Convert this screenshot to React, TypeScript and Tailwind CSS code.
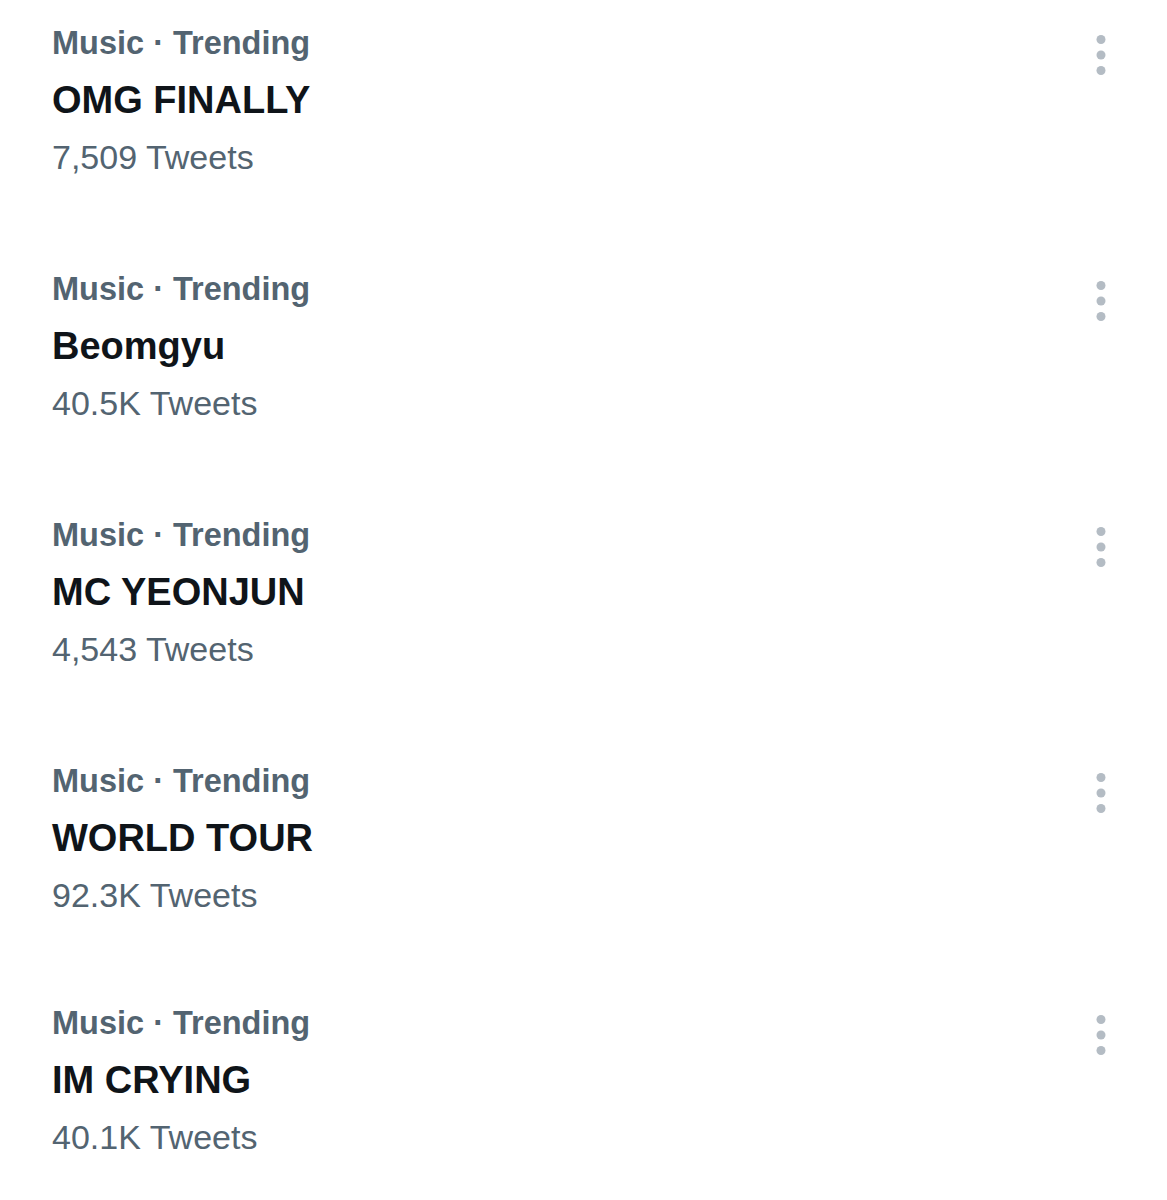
const trends = [
  { title: "OMG FINALLY", count: "7,509 Tweets" },
  { title: "Beomgyu", count: "40.5K Tweets" },
  { title: "MC YEONJUN", count: "4,543 Tweets" },
  { title: "WORLD TOUR", count: "92.3K Tweets" },
  { title: "IM CRYING", count: "40.1K Tweets" },
];

function MoreDots() {
  return (
    <svg width="10" height="42" viewBox="0 0 10 42" className="shrink-0">
      <circle cx="5" cy="4.5" r="4.5" fill="#b4bcc4" />
      <circle cx="5" cy="20" r="4.5" fill="#b4bcc4" />
      <circle cx="5" cy="35.5" r="4.5" fill="#b4bcc4" />
    </svg>
  );
}

export default function App() {
  return (
    <div
      className="w-[1167px] h-[1200px] bg-white pt-[15px] overflow-hidden"
      style={{ fontFamily: '"Liberation Sans", Arial, sans-serif' }}
    >
      {trends.map((t, i) => (
        <div
          key={t.title}
          className={`h-[246px] flex justify-between pl-[52px] pr-[61px] ${i === 4 ? "-mt-[4px]" : ""}`}
        >
          <div className="flex flex-col">
            <div className="h-[57px] leading-[57px] text-[32.5px] font-bold text-[#536471]">
              Music · Trending
            </div>
            <div className="h-[57px] leading-[57px] text-[38px] font-bold text-[#0f1419]">
              {t.title}
            </div>
            <div className="h-[57px] leading-[57px] text-[34px] text-[#536471]">
              {t.count}
            </div>
          </div>
          <div className="pt-[20px]">
            <MoreDots />
          </div>
        </div>
      ))}
    </div>
  );
}
